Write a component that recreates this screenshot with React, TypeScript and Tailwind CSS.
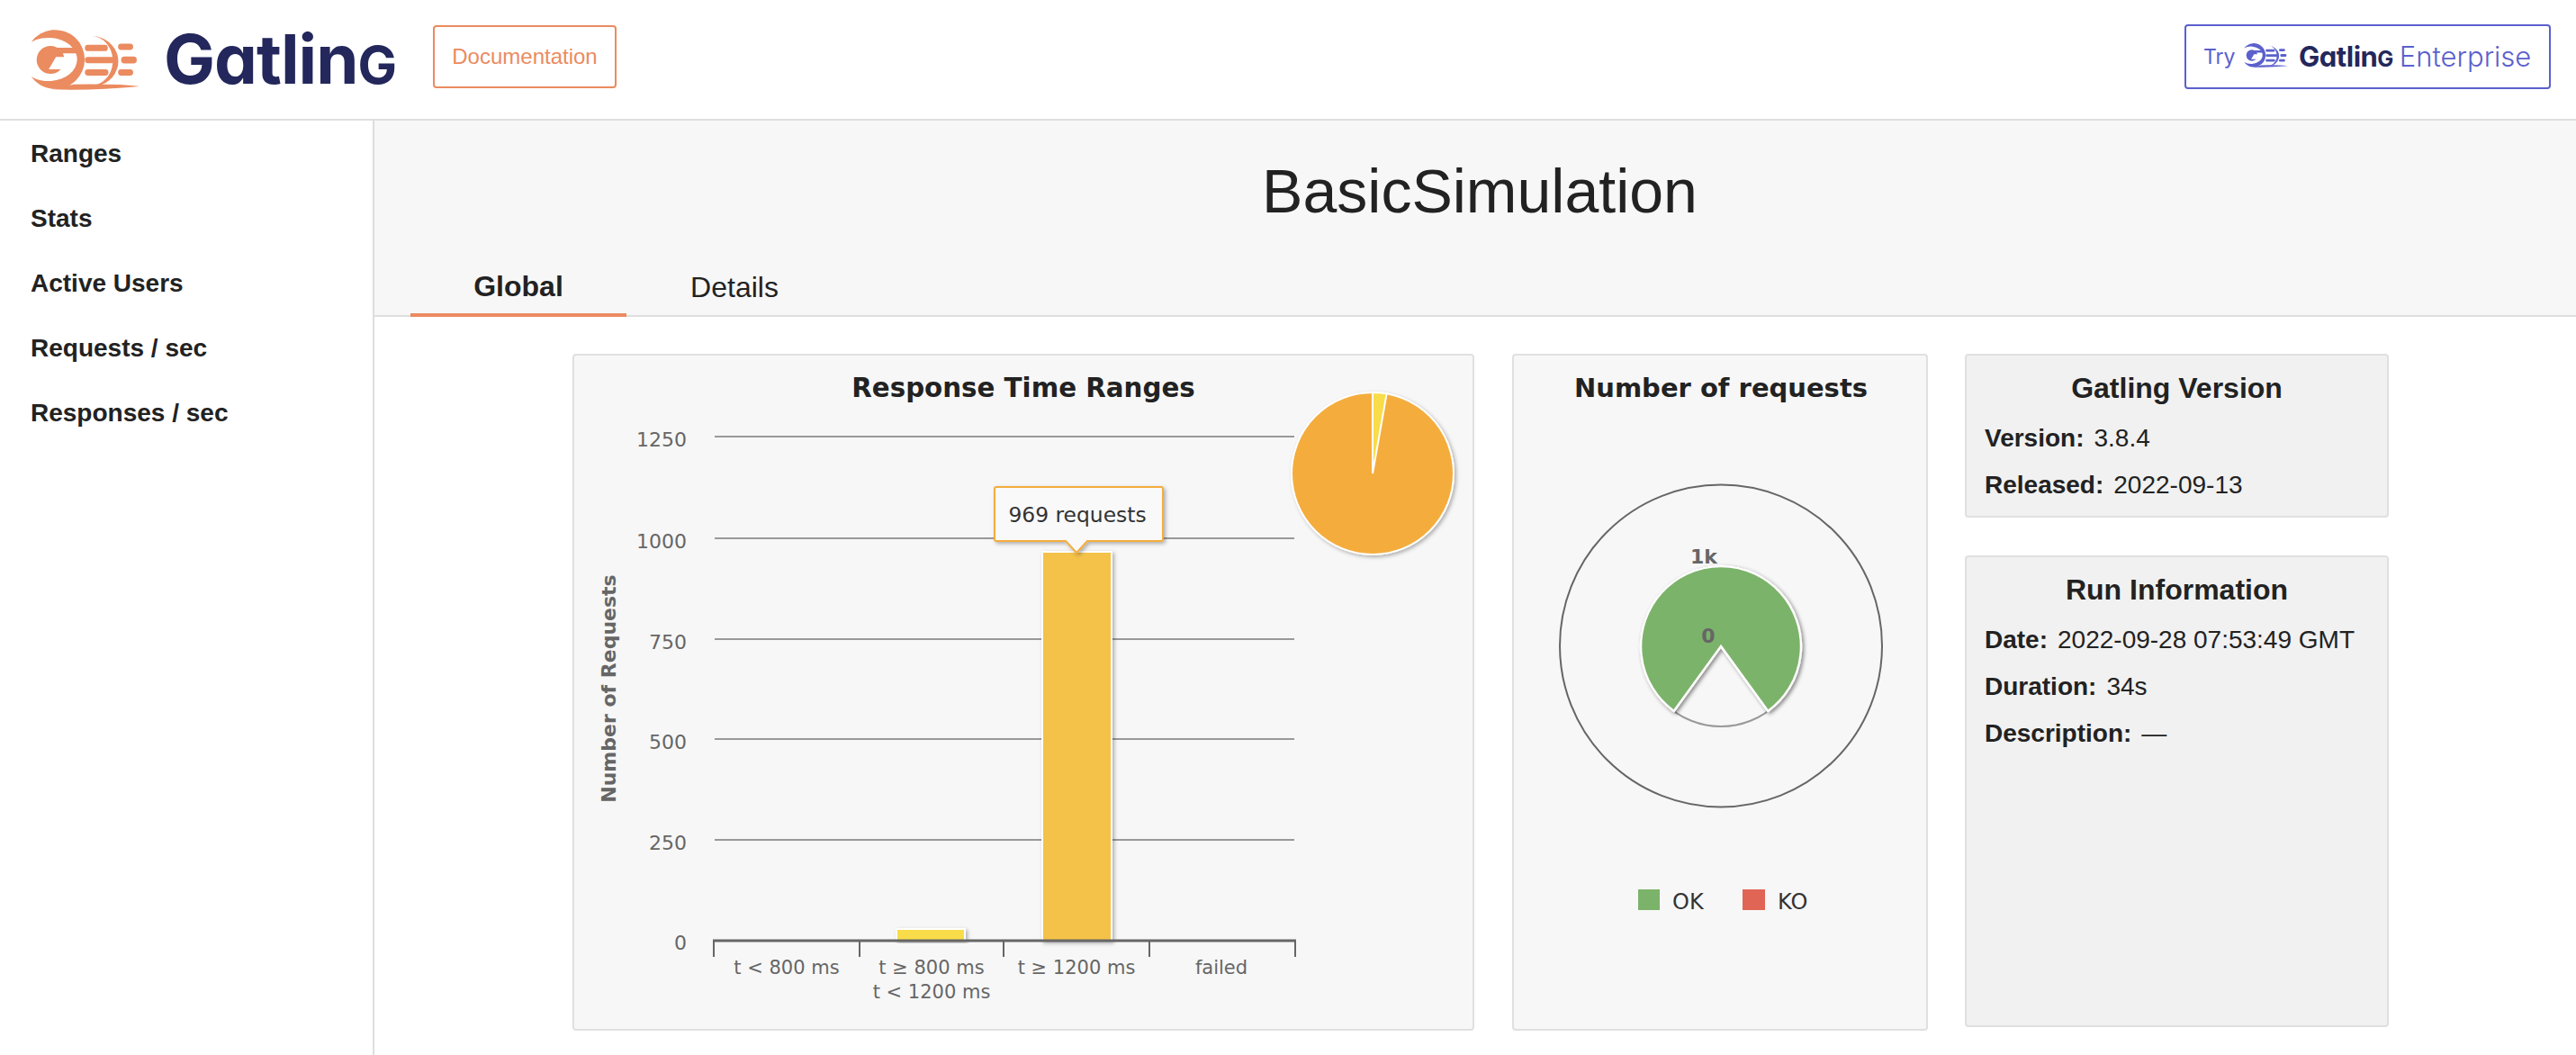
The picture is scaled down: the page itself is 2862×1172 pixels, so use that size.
const ARIAL = "font-['Liberation_Sans',Arial,sans-serif]";
const CHART_FONT = "'DejaVu Sans', Verdana, sans-serif";

const NAV_ITEMS = ["Ranges", "Stats", "Active Users", "Requests / sec", "Responses / sec"];
const GRID = [
  { label: "1250", y: 485 },
  { label: "1000", y: 598 },
  { label: "750", y: 710 },
  { label: "500", y: 821 },
  { label: "250", y: 933 },
];
const TICKS = [793, 955, 1115, 1277, 1439];

function polar(cx: number, cy: number, r: number, deg: number) {
  const a = ((deg - 90) * Math.PI) / 180;
  return [cx + r * Math.cos(a), cy + r * Math.sin(a)];
}

function slice(cx: number, cy: number, r: number, from: number, to: number) {
  const [x1, y1] = polar(cx, cy, r, from);
  const [x2, y2] = polar(cx, cy, r, to);
  const large = to - from > 180 ? 1 : 0;
  return `M${cx} ${cy}L${x1} ${y1}A${r} ${r} 0 ${large} 1 ${x2} ${y2}Z`;
}

function GatlingMark({ className }: { className: string }) {
  return (
    <svg viewBox="28 24 364 200" className={className} fill="currentColor">
      <circle cx="94" cy="124" r="46" />
      <path d="M88 155L112 114H190V150H135V155Z" fill="#ffffff" />
      <path d="M108 84H190V102H100Z" />
      <path d="M30 65A98 98 0 1 1 30 180A95 72 0 1 0 30 65Z" />
      <path d="M232 45A90 84 0 0 1 262 207H244A72 82 0 0 0 232 45Z" />
      <rect x="208" y="74" width="76" height="21" rx="10" />
      <rect x="208" y="114" width="98" height="21" rx="10" />
      <rect x="208" y="155" width="78" height="21" rx="10" />
      <rect x="318" y="70" width="50" height="21" rx="10" />
      <rect x="328" y="113" width="52" height="23" rx="11" />
      <rect x="318" y="155" width="50" height="21" rx="10" />
      <path d="M100 222Q240 226 390 212Q330 203 170 205Z" />
    </svg>
  );
}

function RangesChart() {
  return (
    <svg viewBox="638 395 998 748" className="block w-[998px] h-[748px]" style={{ fontFamily: CHART_FONT }}>
      <defs>
        <filter id="shade" x="-20%" y="-20%" width="140%" height="140%">
          <feDropShadow dx="2" dy="2" stdDeviation="2" floodColor="#000" floodOpacity="0.3" />
        </filter>
      </defs>
      <text x="1137" y="441" textAnchor="middle" fontSize="29.3" fontWeight="700" fill="#222">
        Response Time Ranges
      </text>
      <text transform="translate(684 765) rotate(-90)" textAnchor="middle" fontSize="22" fontWeight="700" fill="#666">
        Number of Requests
      </text>

      {GRID.map((g) => (
        <g key={g.label}>
          <line x1="794" x2="1438" y1={g.y} y2={g.y} stroke="#999" strokeWidth="2" />
          <text x="763" y={g.y + 11} textAnchor="end" fontSize="22" fill="#666">{g.label}</text>
        </g>
      ))}
      <text x="763" y="1055" textAnchor="end" fontSize="22" fill="#666">0</text>

      <rect x="996" y="1032" width="76" height="13" fill="#f8dc4a" stroke="#fff" strokeWidth="2" filter="url(#shade)" />
      <rect x="1158" y="613" width="77" height="432" fill="#f4c24a" stroke="#fff" strokeWidth="2" filter="url(#shade)" />

      <line x1="792" x2="1440" y1="1045" y2="1045" stroke="#666" strokeWidth="3" />
      {TICKS.map((x) => (
        <line key={x} x1={x} x2={x} y1="1045" y2="1063" stroke="#666" strokeWidth="2" />
      ))}
      <g fontSize="21" fill="#666" textAnchor="middle">
        <text x="874" y="1082">t &lt; 800 ms</text>
        <text x="1035" y="1082">t ≥ 800 ms</text>
        <text x="1035" y="1109">t &lt; 1200 ms</text>
        <text x="1196" y="1082">t ≥ 1200 ms</text>
        <text x="1357" y="1082">failed</text>
      </g>

      <g filter="url(#shade)">
        <circle cx="1525" cy="526" r="90" fill="#f4ad3d" stroke="#fff" strokeWidth="2" />
        <path d={slice(1525, 526, 90, 0, 10)} fill="#f8dc4a" stroke="#fff" strokeWidth="2" />
      </g>

      <path
        d="M1107 541H1290Q1292 541 1292 543V599Q1292 601 1290 601H1208L1196 614L1184 601H1107Q1105 601 1105 599V543Q1105 541 1107 541Z"
        fill="#f9f9f9"
        stroke="#f4ad3d"
        strokeWidth="2"
        filter="url(#shade)"
      />
      <text x="1197" y="580" textAnchor="middle" fontSize="23.4" fill="#333">969 requests</text>
    </svg>
  );
}

function RequestsChart() {
  return (
    <svg viewBox="1682 395 458 748" className="block w-[458px] h-[748px]" style={{ fontFamily: CHART_FONT }}>
      <defs>
        <filter id="gaugeShade" x="-20%" y="-20%" width="140%" height="140%">
          <feDropShadow dx="2" dy="2" stdDeviation="2" floodColor="#000" floodOpacity="0.45" />
        </filter>
      </defs>
      <text x="1912" y="441" textAnchor="middle" fontSize="29" fontWeight="700" fill="#222">
        Number of requests
      </text>
      <circle cx="1912" cy="717.5" r="179" fill="none" stroke="#666" strokeWidth="2" />
      <circle cx="1912" cy="718" r="89" fill="none" stroke="#999" strokeWidth="2" />
      <path d={slice(1912, 718, 89, -144, 144)} fill="#7cb36a" stroke="#fff" strokeWidth="2.5" filter="url(#gaugeShade)" />
      <text x="1893" y="626" textAnchor="middle" fontSize="22" fontWeight="700" fill="#666">1k</text>
      <text x="1898" y="714" textAnchor="middle" fontSize="22" fontWeight="700" fill="#666">0</text>
      <rect x="1820" y="988" width="24" height="23" fill="#7cb36a" />
      <text x="1858" y="1010" fontSize="24" fill="#333">OK</text>
      <rect x="1936" y="988" width="25" height="23" fill="#e06555" />
      <text x="1975" y="1010" fontSize="24" fill="#333">KO</text>
    </svg>
  );
}

function InfoRow({ label, value }: { label: string; value: string }) {
  return (
    <div className="h-[52px] flex items-center gap-[11px] text-[28px] text-[#222]">
      <span className="font-bold">{label}</span>
      <span>{value}</span>
    </div>
  );
}

function InfoCard({ title, rows, className }: { title: string; rows: [string, string][]; className: string }) {
  return (
    <div className={`w-[471px] bg-[#f1f1f1] border-2 border-[#e0e0e0] rounded-[4px] px-[20px] pt-[14px] ${className}`}>
      <h2 className="h-[44px] flex items-center justify-center text-[32px] leading-none font-bold text-[#222] mb-[8px]">{title}</h2>
      {rows.map(([label, value]) => (
        <InfoRow key={label} label={label} value={value} />
      ))}
    </div>
  );
}

export default function App() {
  return (
    <div className={`w-[2862px] h-[1172px] overflow-hidden bg-white flex flex-col ${ARIAL}`}>
      <header className="h-[134px] shrink-0 border-b-2 border-[#dedede] flex items-center pl-[34px] pr-[28px]">
        <GatlingMark className="w-[122px] h-[67px] text-[#eb8b60]" />
        <span className="ml-[26px] w-[258px] -mt-[2px] font-['Inter',sans-serif] font-bold text-[76px] leading-none tracking-[-1px] whitespace-nowrap text-[#23275b] [font-feature-settings:'cv11']">
          Gatlin<span className="uppercase text-[58px]">g</span>
        </span>
        <a className="ml-[41px] -mt-[6px] w-[204px] h-[70px] flex items-center justify-center border-2 border-[#eb8b60] rounded-[4px] text-[24px] text-[#eb8b60]">
          Documentation
        </a>
        <a className="ml-auto -mt-[6px] w-[407px] h-[72px] flex items-center pl-[19px] border-2 border-[#5b60cc] rounded-[4px] text-[#5b60cc] font-['Inter',sans-serif]">
          <span className="w-[35px] text-[23px]">Try</span>
          <GatlingMark className="ml-[10px] -mt-[3px] w-[49px] h-[27px]" />
          <span className="ml-[12px] font-bold text-[31px] tracking-[-0.5px] text-[#23275b] [font-feature-settings:'cv11']">
            Gatlin<span className="uppercase text-[24px]">g</span>
          </span>
          <span className="ml-[7px] font-light text-[31px]">Enterprise</span>
        </a>
      </header>

      <div className="flex-1 flex min-h-0">
        <nav className="w-[416px] shrink-0 border-r-2 border-[#dedede] pl-[34px] pt-[1px]">
          {NAV_ITEMS.map((item) => (
            <a key={item} className="h-[72px] flex items-center text-[28px] font-bold text-[#222]">{item}</a>
          ))}
        </nav>

        <main className="flex-1 min-w-0">
          <div className="h-[218px] bg-[#f7f7f7] border-b-2 border-[#dedede] flex flex-col">
            <h1 className="h-[156px] flex items-center justify-center pl-[10px] text-[68px] leading-none text-[#222]">BasicSimulation</h1>
            <div className="flex-1 flex pl-[40px]">
              <a className="w-[240px] h-[62px] -mb-[2px] mt-auto pb-[2px] flex items-center justify-center border-b-4 border-[#eb8b60] text-[32px] font-bold text-[#222]">Global</a>
              <a className="w-[240px] h-[60px] mt-auto pb-[2px] flex items-center justify-center text-[32px] text-[#222]">Details</a>
            </div>
          </div>

          <div className="flex items-start pl-[220px] pt-[41px] gap-[42px]">
            <section className="w-[1002px] h-[752px] bg-[#f7f7f7] border-2 border-[#e0e0e0] rounded-[4px]">
              <RangesChart />
            </section>
            <section className="w-[462px] h-[752px] bg-[#f7f7f7] border-2 border-[#e0e0e0] rounded-[4px]">
              <RequestsChart />
            </section>
            <div className="flex flex-col gap-[42px] -ml-[1px]">
              <InfoCard
                title="Gatling Version"
                className="h-[182px]"
                rows={[["Version:", "3.8.4"], ["Released:", "2022-09-13"]]}
              />
              <InfoCard
                title="Run Information"
                className="h-[524px]"
                rows={[["Date:", "2022-09-28 07:53:49 GMT"], ["Duration:", "34s"], ["Description:", "—"]]}
              />
            </div>
          </div>
        </main>
      </div>
    </div>
  );
}
